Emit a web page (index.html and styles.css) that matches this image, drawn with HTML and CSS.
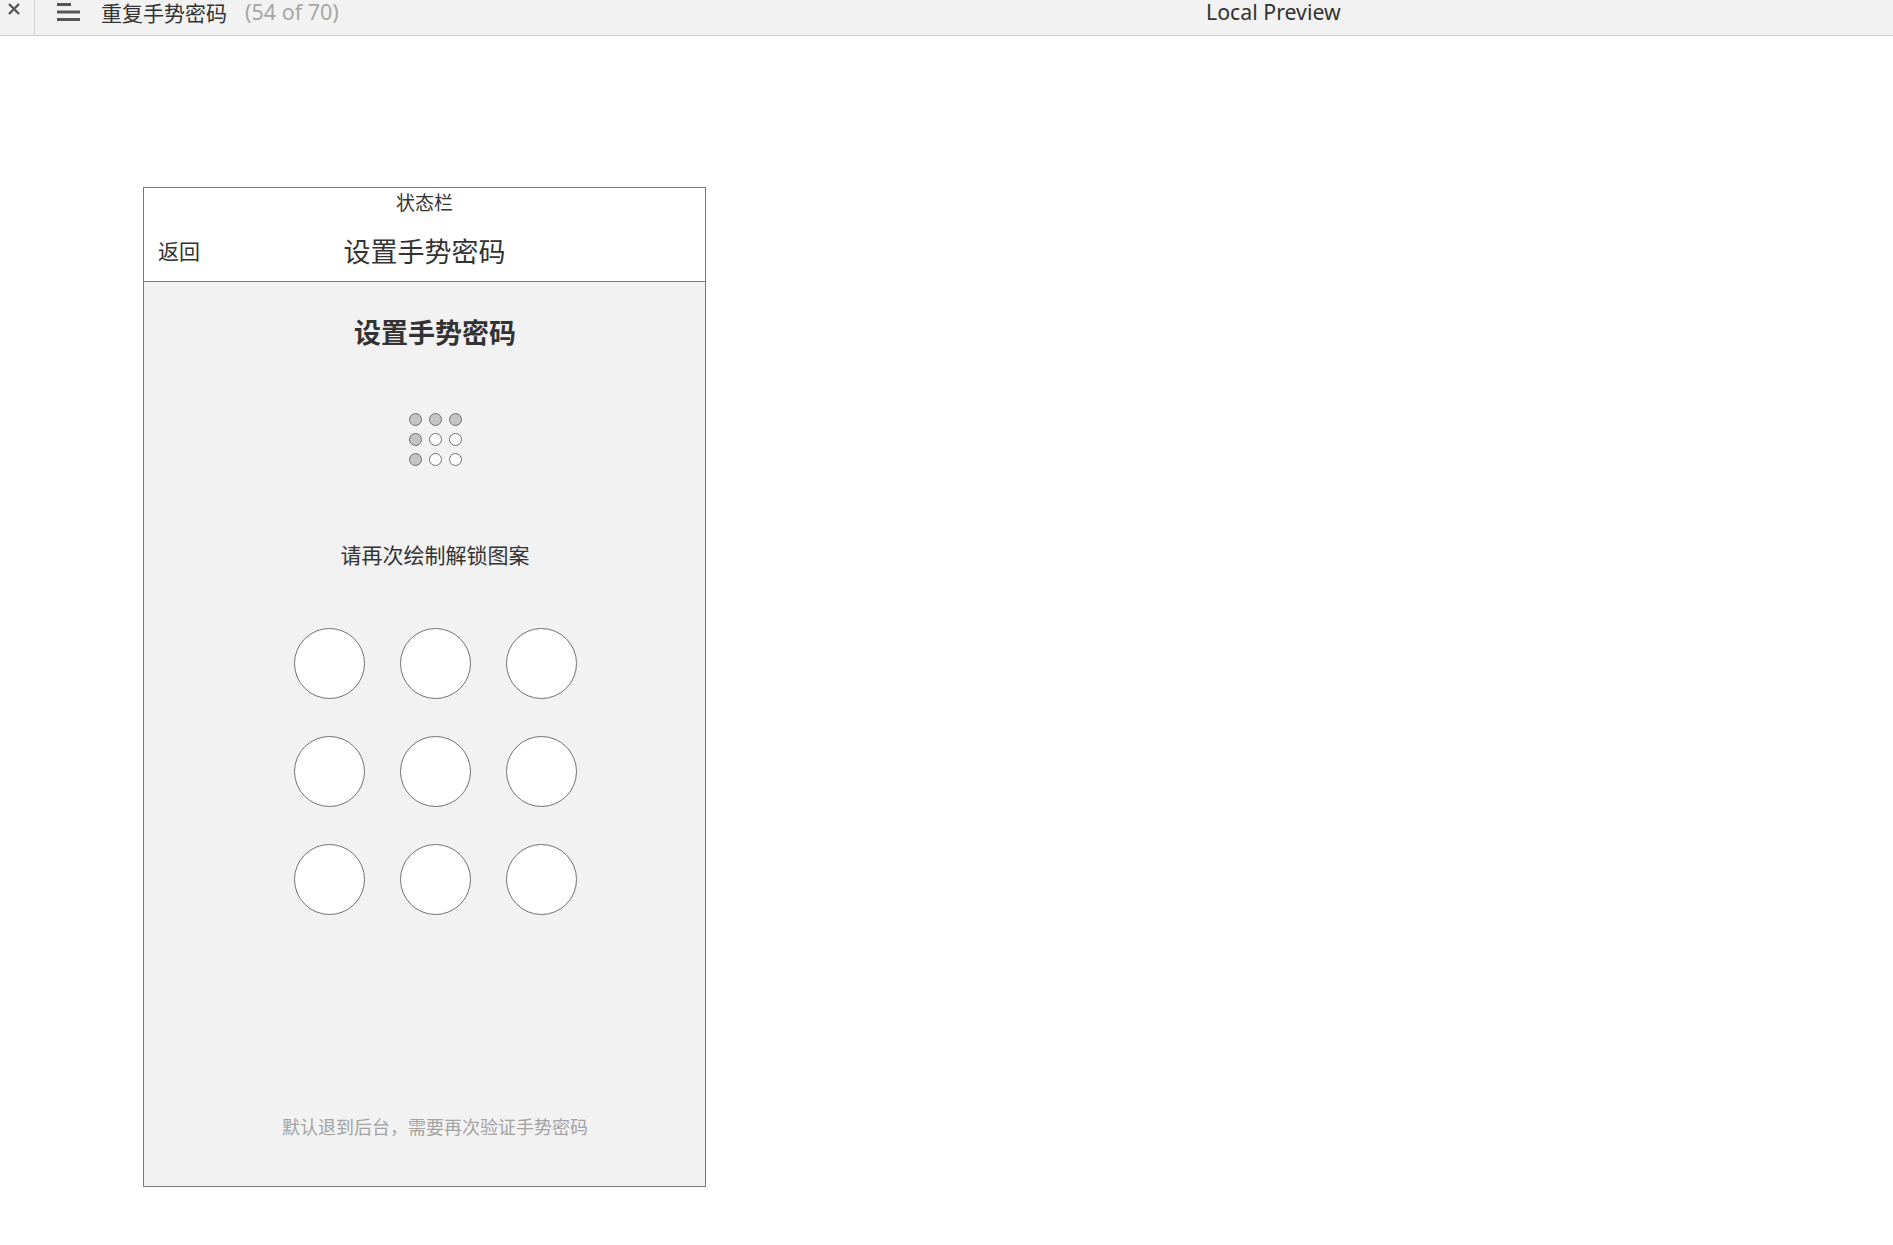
FILE: index.html
```html
<!DOCTYPE html>
<html lang="zh-CN">
<head>
<meta charset="utf-8">
<title>重复手势密码</title>
<link rel="stylesheet" href="styles.css">
</head>
<body>
<header class="topbar">
  <div class="topbar-left">
    <div class="close">
      <svg width="12" height="12" viewBox="0 0 12 12"><path d="M1 1 L11 11 M11 1 L1 11" stroke="#555" stroke-width="2.4" fill="none"/></svg>
    </div>
    <div class="menu">
      <svg width="24" height="23" viewBox="0 0 24 23"><rect x="0" y="3" width="14" height="3" fill="#555"/><rect x="0" y="10.5" width="23" height="3" fill="#555"/><rect x="0" y="18" width="23" height="3" fill="#555"/></svg>
    </div>
    <span class="page-title">重复手势密码</span>
    <span class="page-count">(54 of 70)</span>
  </div>
  <div class="preview-title">Local Preview</div>
</header>

<main class="canvas">
  <section class="phone">
    <div class="phone-header">
      <div class="status">状态栏</div>
      <div class="nav">
        <span class="back">返回</span>
        <span class="nav-title">设置手势密码</span>
        <span></span>
      </div>
    </div>
    <div class="phone-body">
      <h1 class="heading">设置手势密码</h1>
      <div class="mini-grid">
        <span class="dot on"></span><span class="dot on"></span><span class="dot on"></span>
        <span class="dot on"></span><span class="dot"></span><span class="dot"></span>
        <span class="dot on"></span><span class="dot"></span><span class="dot"></span>
      </div>
      <p class="prompt">请再次绘制解锁图案</p>
      <div class="pad">
        <span class="node"></span><span class="node"></span><span class="node"></span>
        <span class="node"></span><span class="node"></span><span class="node"></span>
        <span class="node"></span><span class="node"></span><span class="node"></span>
      </div>
      <p class="hint">默认退到后台，需要再次验证手势密码</p>
    </div>
  </section>
</main>
</body>
</html>
```

FILE: styles.css
```css
html, body {
  margin: 0;
  padding: 0;
  background: #ffffff;
}
body {
  font-family: "Noto Sans", "Noto Sans CJK SC", sans-serif;
  color: #333333;
}

.topbar {
  display: grid;
  grid-template-columns: 1206px 1fr;
  height: 35px;
  background: #f2f2f2;
  border-bottom: 1px solid #cfcfcf;
}
.topbar-left {
  display: flex;
  align-items: flex-start;
}
.close {
  box-sizing: border-box;
  width: 35px;
  height: 35px;
  padding: 3px 0 0 8px;
  border-right: 1px solid #d6d6d6;
}
.close svg { display: block; }
.menu {
  margin-left: 22px;
}
.menu svg { display: block; }
.page-title {
  margin-left: 20px;
  font-family: "Noto Sans CJK SC", sans-serif;
  font-size: 21px;
  line-height: 24px;
  color: #333333;
}
.page-count {
  margin-left: 18px;
  font-size: 21.5px;
  line-height: 24px;
  color: #a6a6a6;
}
.preview-title {
  font-size: 21.3px;
  line-height: 24px;
  color: #333333;
}

.canvas {
  padding: 151px 0 0 143px;
}
.phone {
  box-sizing: border-box;
  width: 563px;
  height: 1000px;
  border: 1px solid #797979;
  display: flex;
  flex-direction: column;
  font-family: "Noto Sans CJK SC", sans-serif;
}
.phone-header {
  background: #ffffff;
  height: 93px;
  border-bottom: 1px solid #797979;
}
.status {
  text-align: center;
  font-size: 19px;
  line-height: 28px;
  color: #333333;
}
.nav {
  display: grid;
  grid-template-columns: 1fr auto 1fr;
  align-items: center;
  height: 62px;
  padding-top: 3px;
}
.back {
  padding-left: 14px;
  font-size: 21px;
}
.nav-title {
  font-size: 27px;
}

.phone-body {
  flex: 1;
  background: #f2f2f2;
  display: flex;
  flex-direction: column;
  align-items: center;
  padding: 30px 0 47px 21px;
}
.heading {
  margin: 0;
  font-size: 27px;
  line-height: 40px;
  font-weight: 700;
  color: #333333;
}
.mini-grid {
  margin-top: 61px;
  display: grid;
  grid-template-columns: repeat(3, 13px);
  grid-auto-rows: 13px;
  gap: 7px;
}
.dot {
  box-sizing: border-box;
  width: 13px;
  height: 13px;
  border-radius: 50%;
  border: 1.5px solid #6f6f6f;
  background: #ffffff;
}
.dot.on {
  background: #c4c4c4;
}
.prompt {
  margin: 73px 0 0;
  font-size: 21px;
  line-height: 30px;
  color: #333333;
}
.pad {
  margin-top: 59px;
  display: grid;
  grid-template-columns: repeat(3, 71px);
  grid-auto-rows: 71px;
  column-gap: 35px;
  row-gap: 37px;
}
.node {
  box-sizing: border-box;
  width: 71px;
  height: 71px;
  border-radius: 50%;
  border: 1.6px solid #737373;
  background: #ffffff;
}
.hint {
  margin: auto 0 0;
  font-size: 18px;
  line-height: 26px;
  color: #a3a3a3;
}
```
